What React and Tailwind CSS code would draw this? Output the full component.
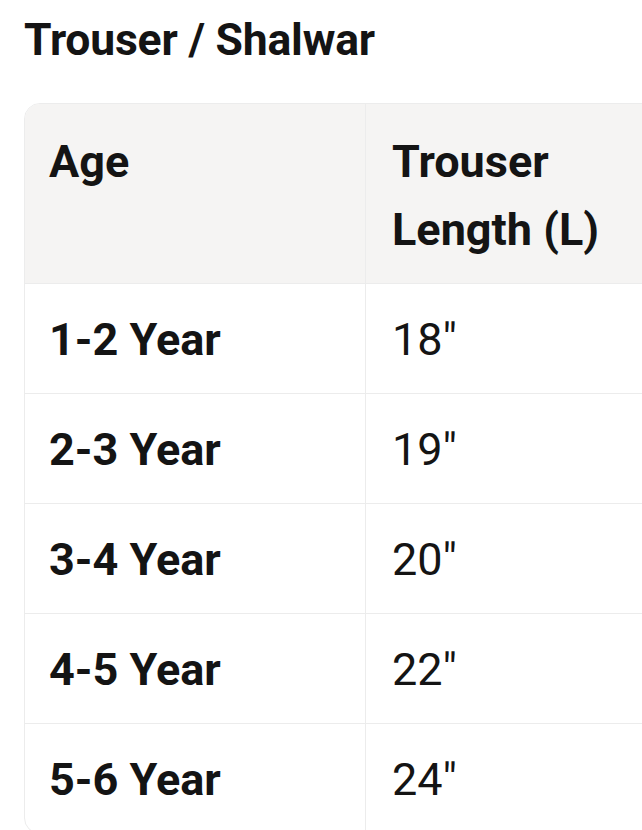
import React from 'react';

const rows = [
  { age: '1-2 Year', length: '18"' },
  { age: '2-3 Year', length: '19"' },
  { age: '3-4 Year', length: '20"' },
  { age: '4-5 Year', length: '22"' },
  { age: '5-6 Year', length: '24"' },
];

export default function App() {
  return (
    <div className="w-[642px] h-[830px] overflow-hidden bg-white text-[#141414] font-['Roboto',sans-serif]">
      <h2 className="pl-[24px] pt-[14px] text-[44.5px] leading-[1.2] font-bold tracking-[-0.2px]">Trouser / Shalwar</h2>

      <div className="ml-[24px] mt-[36px] w-[684px] rounded-2xl border border-[#ececec] overflow-hidden">
        <div className="grid grid-cols-2 bg-[#f5f4f3]">
          <div className="pl-[24px] pr-4 pt-[24px] pb-[19px] text-[45px] leading-[68px] font-bold border-r border-[#ececec]">Age</div>
          <div className="pl-[26px] pr-4 pt-[24px] pb-[19px] text-[45px] leading-[68px] font-bold">Trouser Length (L)</div>
        </div>
        {rows.map((r) => (
          <div key={r.age} className="grid grid-cols-2 border-t border-[#ececec]">
            <div className="pl-[24px] pr-4 pt-[22px] pb-[19px] text-[45px] leading-[68px] font-bold border-r border-[#ececec]">{r.age}</div>
            <div className="pl-[26px] pr-4 pt-[22px] pb-[19px] text-[45px] leading-[68px] font-normal">{r.length}</div>
          </div>
        ))}
      </div>
    </div>
  );
}
